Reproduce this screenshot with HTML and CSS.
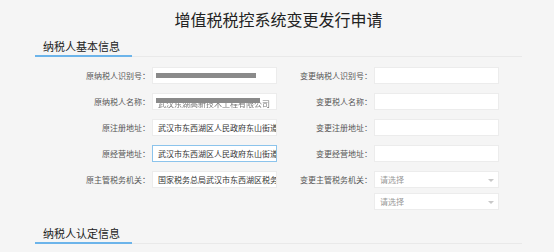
FILE: index.html
```html
<!DOCTYPE html>
<html lang="zh">
<head>
<meta charset="utf-8">
<title>增值税税控系统变更发行申请</title>
<link rel="stylesheet" href="styles.css">
</head>
<body>
<div class="page">
  <h1 class="title">增值税税控系统变更发行申请</h1>

  <div class="section">
    <div class="section-head"><span class="section-title">纳税人基本信息</span></div>
    <div class="form">
      <div class="label">原纳税人识别号：</div>
      <div class="field redacted"><span class="blur-bar bar1"></span></div>
      <div class="label">变更纳税人识别号：</div>
      <div class="field"></div>

      <div class="label">原纳税人名称：</div>
      <div class="field redacted"><span class="faint">武汉东湖高新技术工程有限公司</span><span class="blur-bar bar2"></span></div>
      <div class="label">变更税人名称：</div>
      <div class="field"></div>

      <div class="label">原注册地址：</div>
      <div class="field"><span class="val">武汉市东西湖区人民政府东山街道办事处</span></div>
      <div class="label">变更注册地址：</div>
      <div class="field"></div>

      <div class="label">原经营地址：</div>
      <div class="field focused"><span class="val">武汉市东西湖区人民政府东山街道办事处</span></div>
      <div class="label">变更经营地址：</div>
      <div class="field"></div>

      <div class="label">原主管税务机关：</div>
      <div class="field"><span class="val">国家税务总局武汉市东西湖区税务局</span></div>
      <div class="label">变更主管税务机关：</div>
      <div class="field select"><span class="ph">请选择</span><span class="caret"></span></div>

      <div class="label empty"></div>
      <div class="field empty-field"></div>
      <div class="label empty"></div>
      <div class="field select second"><span class="ph">请选择</span><span class="caret"></span></div>
    </div>
  </div>

  <div class="section second-section">
    <div class="section-head"><span class="section-title">纳税人认定信息</span></div>
  </div>
</div>
</body>
</html>
```

FILE: styles.css
```css
html, body {
  margin: 0;
  padding: 0;
  background: #f5f5f5;
}
body {
  font-family: "Noto Sans CJK SC", "Noto Sans", sans-serif;
  color: #333;
  overflow: hidden;
}
.page {
  width: 487px;
  margin: 0 0 0 35px;
}
.title {
  margin: 0;
  padding-top: 7px;
  height: 29px;
  line-height: 24px;
  font-size: 16px;
  font-weight: normal;
  text-align: center;
  color: #222;
}
.section-head {
  border-bottom: 1px solid #e9e9e9;
  height: 20px;
  display: flex;
  align-items: flex-end;
}
.section-title {
  display: block;
  width: 97px;
  box-sizing: border-box;
  padding-left: 8px;
  font-size: 11px;
  line-height: 15px;
  height: 18px;
  color: #222;
  border-bottom: 2px solid #6cb4ea;
  margin-bottom: -1px;
}
.form {
  display: grid;
  grid-template-columns: 117px 125px 97px 125px;
  grid-auto-rows: 17px;
  row-gap: 9px;
  padding-top: 10px;
}
.label {
  font-size: 8px;
  color: #555;
  text-align: right;
  padding-right: 2px;
  line-height: 17px;
  white-space: nowrap;
}
.field {
  position: relative;
  background: #fff;
  border: 1px solid #ececec;
  box-sizing: border-box;
  height: 17px;
  padding: 0 5px;
  font-size: 8px;
  line-height: 15px;
  color: #333;
  overflow: hidden;
  white-space: nowrap;
}
.field.focused {
  border-color: #8cc4ec;
}
.val {
  display: block;
}
.faint {
  display: block;
  color: #777;
  font-size: 8px;
  padding-top: 2px;
  filter: blur(0.5px);
}
.blur-bar {
  position: absolute;
  left: 3px;
  height: 5px;
  background: #8a8a8a;
  filter: blur(0.6px);
}
.bar1 {
  top: 5px;
  width: 100px;
}
.bar2 {
  top: 4px;
  width: 104px;
}
.select .ph {
  color: #999;
  font-size: 8px;
}
.caret {
  position: absolute;
  right: 4px;
  top: 7px;
  width: 0;
  height: 0;
  border-left: 3px solid transparent;
  border-right: 3px solid transparent;
  border-top: 3px solid #c8c8c8;
}
.select.second {
  margin-top: -4px;
}
.empty-field {
  visibility: hidden;
}
.second-section {
  margin-top: 9px;
}
```
